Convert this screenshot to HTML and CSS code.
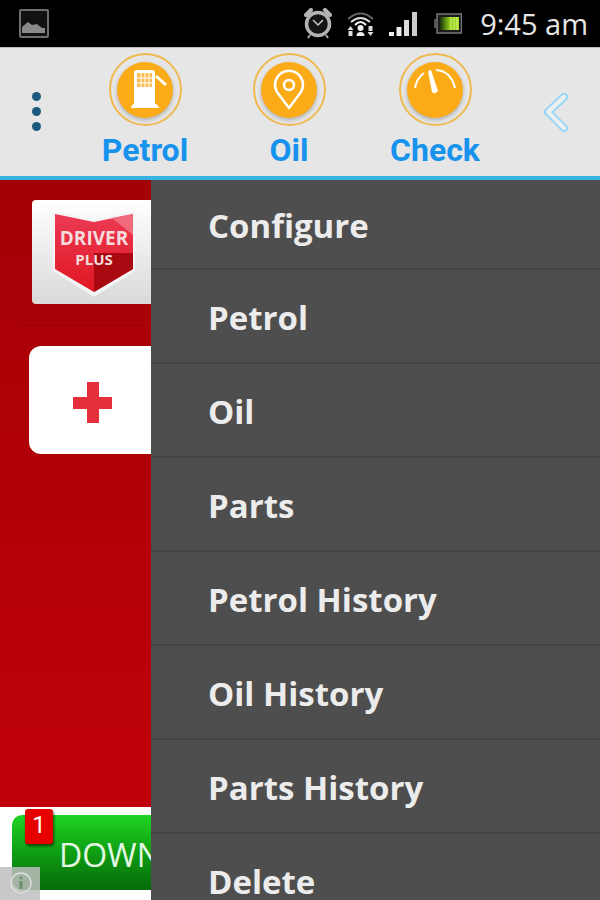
FILE: index.html
```html
<!DOCTYPE html>
<html lang="en">
<head>
    <meta charset="UTF-8">
    <meta name="viewport" content="width=device-width, initial-scale=1.0">
    <title>Driver Plus</title>
    <link rel="stylesheet" href="styles.css">
</head>
<body>

    <div class="status-bar">
        <svg class="status-picture" width="32" height="32" viewBox="0 0 32 32">
            <rect x="2" y="2" width="28" height="27" rx="1" fill="#111" stroke="#6e6e6e" stroke-width="2"/>
            <path d="M4 25 V19 L10 14 L14 17 L19 16 L24 20 L27 20 V25 Z" fill="#8a8a8a"/>
        </svg>
        <div class="status-right">
            <svg width="28" height="31" viewBox="0 0 28 31">
                <circle cx="14" cy="16" r="11.5" fill="#141414" stroke="#b4b4b4" stroke-width="3.5"/>
                <path d="M2 7 L7 2 M26 7 L21 2" stroke="#b4b4b4" stroke-width="4" stroke-linecap="round"/>
                <path d="M9 12 L14 17 L19 12" fill="none" stroke="#c8c8c8" stroke-width="1.5"/>
                <path d="M6 27 L4 30 M22 27 L24 30" stroke="#aaa" stroke-width="2"/>
            </svg>
            <svg width="27" height="25" viewBox="0 0 27 25">
                <path d="M1 8 Q13.500 -3 26 8" fill="none" stroke="#666" stroke-width="2"/>
                <path d="M4 11 Q13.500 3 23 11" fill="none" stroke="#ddd" stroke-width="2"/>
                <path d="M8 14 Q13.500 8 19 14" fill="none" stroke="#eee" stroke-width="2"/>
                <circle cx="13.500" cy="17" r="3" fill="#eee"/>
                <path d="M9.500 25 a4 4 0 0 1 8 0 Z" fill="#eee"/>
                <path d="M3.500 15 L6.500 19 H0.500 Z M1.500 20 H5.500 V25 H1.500 Z M23.500 25 L20.500 21 H26.500 Z M21.500 15 H25.500 V20 H21.500 Z" fill="#ddd"/>
            </svg>
            <svg class="status-signal" width="28" height="24" viewBox="0 0 28 24">
                <rect x="0" y="20" width="5" height="4" fill="#eee"/>
                <rect x="7.500" y="15" width="5" height="9" fill="#eee"/>
                <rect x="15" y="8" width="5" height="16" fill="#ddd"/>
                <rect x="23" y="0" width="5" height="24" fill="#ccc"/>
            </svg>
            <svg class="status-battery" width="28" height="21" viewBox="0 0 28 21">
                <rect x="0" y="6" width="2" height="9" fill="#555"/>
                <rect x="3" y="1" width="24.500" height="19" fill="#1c1c1c" stroke="#777" stroke-width="1.500"/>
                <rect x="6" y="4" width="19" height="13" fill="url(#batteryFill)"/>
                <path d="M17 4 V17 M20 4 V17 M23 4 V17" stroke="#d4f07a" stroke-width="1"/>
                <defs>
                    <linearGradient id="batteryFill">
                        <stop offset="0" stop-color="#17300a"/>
                        <stop offset="0.5" stop-color="#8fce1c"/>
                        <stop offset="1" stop-color="#a9e12a"/>
                    </linearGradient>
                </defs>
            </svg>
            <span class="status-time">9:45 am</span>
        </div>
    </div>

    <div class="toolbar">
        <div class="dots"><span></span><span></span><span></span></div>

        <div class="tool tool-petrol">
            <div class="tool-ring">
                <div class="tool-disc">
                    <svg width="56" height="56" viewBox="0 0 56 56">
                        <path d="M17 11 Q17 8 20 8 H35 Q38 8 38 11 V42 Q41 42 42 46 H14 Q15 42 17 42 Z" fill="#fff"/>
                        <rect x="20" y="11" width="15" height="14" rx="1" fill="#f9bb52"/>
                        <path d="M24 11 V25 M28 11 V25 M32 11 V25 M20 16 H35 M20 21 H35" stroke="#fff" stroke-width="1"/>
                        <path d="M39 14 L49 23" stroke="#fff" stroke-width="3"/>
                    </svg>
                </div>
            </div>
            <span class="tool-label">Petrol</span>
        </div>

        <div class="tool tool-oil">
            <div class="tool-ring">
                <div class="tool-disc">
                    <svg width="56" height="56" viewBox="0 0 56 56">
                        <path d="M28 46 L16 30 A14 14 0 1 1 40 30 Z" fill="none" stroke="#fff" stroke-width="2.500" stroke-linejoin="round"/>
                        <circle cx="28" cy="23" r="5" fill="none" stroke="#fff" stroke-width="2.500"/>
                    </svg>
                </div>
            </div>
            <span class="tool-label">Oil</span>
        </div>

        <div class="tool tool-check">
            <div class="tool-ring">
                <div class="tool-disc">
                    <svg width="56" height="56" viewBox="0 0 56 56">
                        <path d="M8 26 Q10 16 17 11" fill="none" stroke="#fff" stroke-width="2"/>
                        <path d="M29 8 Q44 9 48 26" fill="none" stroke="#fff" stroke-width="2"/>
                        <path d="M21 9 L24 8 L31 29 Q28 33 25 30 Z" fill="#fff"/>
                    </svg>
                </div>
            </div>
            <span class="tool-label">Check</span>
        </div>

        <svg class="back-arrow" width="26" height="41" viewBox="0 0 26 41">
            <path d="M21 5 L5 20 L21 36" fill="none" stroke="#8fd5f8" stroke-width="8" stroke-linecap="round" stroke-linejoin="round"/>
            <path d="M21 5 L5 20 L21 36" fill="none" stroke="#e9eef1" stroke-width="4.500" stroke-linecap="round" stroke-linejoin="round"/>
        </svg>
    </div>

    <div class="main">
        <div class="side">
            <div class="logo-card">
                <svg width="85" height="86" viewBox="0 0 85 86">
                    <defs>
                        <linearGradient id="shieldLeft" x1="0" y1="0" x2="0" y2="1">
                            <stop offset="0" stop-color="#ec3a55"/>
                            <stop offset="1" stop-color="#e01722"/>
                        </linearGradient>
                    </defs>
                    <path d="M1 0 L42 9 L83 0 V60 L42 86 L1 60 Z" fill="#f4f4f4"/>
                    <path d="M3 3 L42 11 L81 3 V58 L42 81 L3 58 Z" fill="url(#shieldLeft)"/>
                    <path d="M42 42 H81 V58 L42 81 Z" fill="#a90a12"/>
                    <path d="M60 7 L81 3 V24 Z" fill="#f06a7c"/>
                    <text x="42" y="34" class="logo-driver" text-anchor="middle">DRIVER</text>
                    <text x="42" y="54" class="logo-plus" text-anchor="middle">PLUS</text>
                </svg>
            </div>
            <div class="side-rule"></div>
            <div class="add-card"><div class="plus"></div></div>
            <div class="ad">
                <div class="ad-button">
                    <span class="ad-text">DOWNLOAD</span>
                </div>
                <div class="ad-badge">1</div>
                <div class="ad-info">
                    <svg width="22" height="22" viewBox="0 0 22 22">
                        <circle cx="11" cy="11" r="10" fill="none" stroke="#ddd" stroke-width="1.500"/>
                        <circle cx="11" cy="6" r="1.500" fill="#6c8f6c"/>
                        <rect x="9.500" y="9" width="3" height="8" fill="#6c8f6c"/>
                    </svg>
                </div>
            </div>
        </div>

        <div class="menu">
            <div class="menu-item first">Configure</div>
            <div class="menu-item">Petrol</div>
            <div class="menu-item">Oil</div>
            <div class="menu-item">Parts</div>
            <div class="menu-item">Petrol History</div>
            <div class="menu-item">Oil History</div>
            <div class="menu-item">Parts History</div>
            <div class="menu-item">Delete</div>
        </div>
    </div>

</body>
</html>
```

FILE: styles.css
```css
/* base */
html, body {
    margin: 0;
    padding: 0;
    height: 900px;
    overflow: hidden;
}

body {
    width: 600px;
    font-family: 'Roboto', 'Liberation Sans', sans-serif;
    background-color: #000;
    display: flex;
    flex-direction: column;
}

/* status bar */
.status-bar {
    height: 47px;
    flex: none;
    background-color: #000;
    display: flex;
    align-items: center;
    justify-content: space-between;
    padding: 0 12px 0 18px;
    box-sizing: border-box;
}

.status-right {
    display: flex;
    align-items: center;
    gap: 15px;
}

.status-battery {
    margin-left: 2px;
}

.status-time {
    color: #e6e6e6;
    font-size: 29px;
    margin-left: 3px;
    font-family: 'Open Sans', sans-serif;
}

/* toolbar */
.toolbar {
    height: 133px;
    flex: none;
    box-sizing: border-box;
    background-color: #e6e6e6;
    border-top: 1px solid #bbb;
    border-bottom: 4px solid #36b3e0;
    position: relative;
    display: flex;
}

.dots {
    position: absolute;
    left: 32px;
    top: 44px;
    display: flex;
    flex-direction: column;
    gap: 6px;
}

.dots span {
    width: 9px;
    height: 9px;
    border-radius: 50%;
    background-color: #1c5b7d;
}

.tool {
    position: absolute;
    top: 5px;
    display: flex;
    flex-direction: column;
    align-items: center;
    width: 120px;
}

.tool-petrol {
    left: 85px;
}

.tool-oil {
    left: 229px;
}

.tool-check {
    left: 375px;
}

.tool-ring {
    width: 73px;
    height: 73px;
    box-sizing: border-box;
    border: 2px solid #efb94f;
    border-radius: 50%;
    display: flex;
    align-items: center;
    justify-content: center;
}

.tool-disc {
    width: 56px;
    height: 56px;
    border-radius: 50%;
    background-color: #fbab18;
    box-shadow: 0 2px 4px rgba(0, 0, 0, 0.25);
    overflow: hidden;
}

.tool-disc svg {
    display: block;
}

.tool-label {
    color: #1793ee;
    font-size: 32px;
    font-weight: 700;
    line-height: 36px;
    margin-top: 6px;
}

.back-arrow {
    position: absolute;
    left: 543px;
    top: 44px;
}

/* content */
.main {
    flex: 1;
    display: flex;
    overflow: hidden;
}

.side {
    width: 151px;
    flex: none;
    position: relative;
    overflow: hidden;
    background: linear-gradient(#a30005, #b70009 60%, #c4000a);
}

.logo-card {
    position: absolute;
    left: 32px;
    top: 20px;
    width: 130px;
    height: 104px;
    border-radius: 4px;
    background: linear-gradient(#fff, #d9d9d9);
    box-sizing: border-box;
    padding: 11px 0 0 20px;
}

.logo-driver {
    font-family: 'Open Sans', sans-serif;
    font-weight: 700;
    font-size: 19px;
    fill: #f4dcdc;
}

.logo-plus {
    font-family: 'Open Sans', sans-serif;
    font-weight: 700;
    font-size: 15px;
    fill: #f4dcdc;
}

.side-rule {
    position: absolute;
    left: 20px;
    top: 145px;
    width: 125px;
    height: 1px;
    background-color: #990006;
}

.add-card {
    position: absolute;
    left: 29px;
    top: 166px;
    width: 140px;
    height: 108px;
    border-radius: 12px;
    background-color: #fff;
}

.plus {
    position: absolute;
    left: 44px;
    top: 36px;
    width: 39px;
    height: 41px;
    background:
        linear-gradient(#e4303c, #e4303c) center / 12px 100% no-repeat,
        linear-gradient(#e4303c, #e4303c) center / 100% 12px no-repeat;
}

/* ad */
.ad {
    position: absolute;
    left: 0;
    top: 627px;
    width: 151px;
    height: 93px;
    background-color: #fff;
}

.ad-button {
    position: absolute;
    left: 12px;
    top: 8px;
    width: 170px;
    height: 75px;
    border-radius: 10px;
    background: linear-gradient(#1fd424, #0f9e13 50%, #066a09);
}

.ad-text {
    position: absolute;
    left: 47px;
    top: 18px;
    color: #e3f7e3;
    font-family: 'Open Sans', sans-serif;
    font-size: 32px;
    white-space: nowrap;
}

.ad-badge {
    position: absolute;
    left: 25px;
    top: 2px;
    width: 28px;
    height: 35px;
    border-radius: 3px;
    background-color: #e60000;
    box-shadow: 1px 2px 3px rgba(0, 0, 0, 0.6);
    color: #fff;
    font-size: 24px;
    line-height: 32px;
    text-align: center;
}

.ad-info {
    position: absolute;
    left: 0;
    top: 60px;
    width: 40px;
    height: 33px;
    background-color: rgba(190, 190, 190, 0.85);
    box-sizing: border-box;
    padding: 5px 0 0 10px;
}

.ad-info svg {
    display: block;
}

/* drawer menu */
.menu {
    flex: 1;
    background-color: #4e4e4e;
}

.menu-item {
    height: 94px;
    box-sizing: border-box;
    border-bottom: 2px solid #444;
    padding: 0 0 0 57px;
    color: #ececec;
    font-family: 'Open Sans', sans-serif;
    font-size: 33px;
    font-weight: 700;
    line-height: 96px;
}

.menu-item.first {
    height: 90px;
    line-height: 92px;
}
```
